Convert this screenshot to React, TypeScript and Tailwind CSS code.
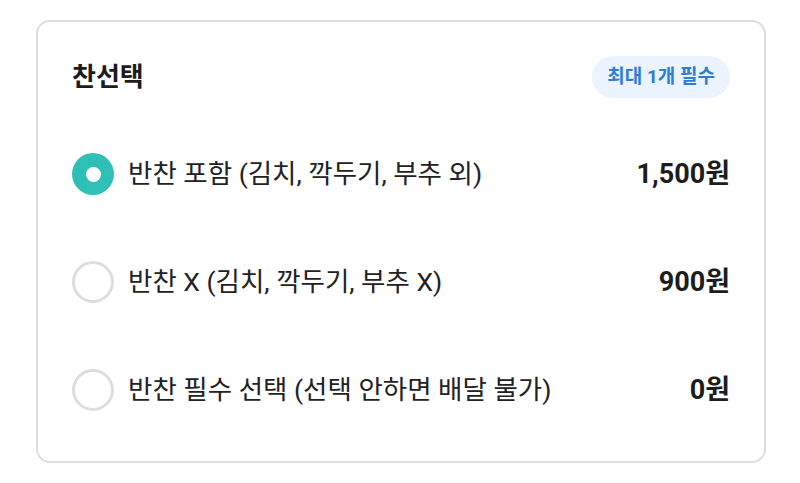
const options = [
  { label: '반찬 포함 (김치, 깍두기, 부추 외)', price: '1,500원', selected: true },
  { label: '반찬 X (김치, 깍두기, 부추 X)', price: '900원', selected: false },
  { label: '반찬 필수 선택 (선택 안하면 배달 불가)', price: '0원', selected: false },
]

function Radio({ selected }: { selected: boolean }) {
  if (selected) {
    return (
      <span className="flex h-[42px] w-[42px] shrink-0 items-center justify-center rounded-full bg-[#2ec0b6]">
        <span className="h-[15px] w-[15px] rounded-full bg-white" />
      </span>
    )
  }
  return <span className="h-[42px] w-[42px] shrink-0 rounded-full border-[3px] border-[#dddddd] bg-white" />
}

export default function App() {
  return (
    <div
      className="h-[483px] w-[800px] bg-white pt-[20px] pl-[36px]"
      style={{ fontFamily: "Roboto, 'Noto Sans CJK KR', sans-serif" }}
    >
      <div className="h-[443px] w-[730px] rounded-[14px] border-2 border-[#dedede] px-[34px] pt-[34px]">
        <div className="flex h-[42px] items-center justify-between">
          <h2 className="text-[26px] font-bold leading-none text-[#1c1c1c]">찬선택</h2>
          <span className="flex h-[42px] items-center rounded-full bg-[#ebf4fe] px-[15px] text-[19px] font-bold text-[#2b7ed4]">
            최대 1개 필수
          </span>
        </div>
        <ul className="mt-[22px]">
          {options.map((o) => (
            <li key={o.label} className="flex h-[108px] items-center">
              <Radio selected={o.selected} />
              <span className="ml-[14px] flex-1 text-[26.5px] text-[#222222]">{o.label}</span>
              <span className="text-[27px] font-bold text-[#1c1c1c]">{o.price}</span>
            </li>
          ))}
        </ul>
      </div>
    </div>
  )
}
